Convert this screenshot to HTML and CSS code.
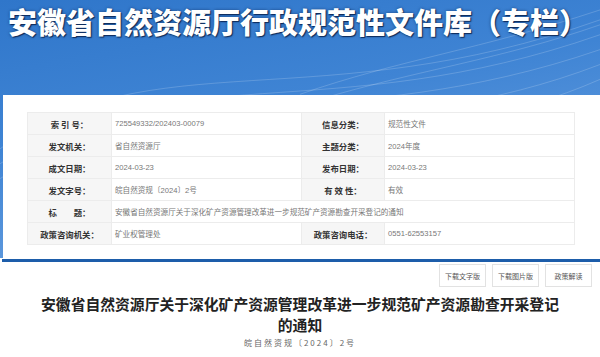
FILE: index.html
```html
<!DOCTYPE html>
<html lang="zh-CN">
<head>
  <meta charset="UTF-8" />
  <meta name="viewport" content="width=device-width, initial-scale=1.0" />
  <title>安徽省自然资源厅行政规范性文件库（专栏）</title>
  <link rel="stylesheet" href="styles.css">
</head>
<body>
  <div class="top">
    <svg class="waves" viewBox="0 0 600 260" preserveAspectRatio="none">
      <path d="M0 150 C150 40 320 120 600 20" />
      <path d="M0 165 C170 55 330 130 600 35" />
      <path d="M0 180 C180 70 340 140 600 50" />
      <path d="M60 200 C220 90 380 150 600 65" />
      <path d="M120 220 C260 110 420 160 600 80" />
      <path d="M300 95 C400 60 480 50 600 10" />
      <path d="M320 100 C420 70 500 60 600 25" />
    </svg>
    <h1 class="site-title">安徽省自然资源厅行政规范性文件库（专栏）</h1>

    <div class="panel">
      <table class="meta">
        <tr>
          <th>索 引 号：</th>
          <td>725549332/202403-00079</td>
          <th>信息分类：</th>
          <td>规范性文件</td>
        </tr>
        <tr>
          <th>发文机关：</th>
          <td>省自然资源厅</td>
          <th>主题分类：</th>
          <td>2024年度</td>
        </tr>
        <tr>
          <th>成文日期：</th>
          <td>2024-03-23</td>
          <th>发布日期：</th>
          <td>2024-03-23</td>
        </tr>
        <tr>
          <th>发文字号：</th>
          <td>皖自然资规〔2024〕2号</td>
          <th>有 效 性：</th>
          <td>有效</td>
        </tr>
        <tr>
          <th>标　　题：</th>
          <td colspan="3">安徽省自然资源厅关于深化矿产资源管理改革进一步规范矿产资源勘查开采登记的通知</td>
        </tr>
        <tr>
          <th>政策咨询机关：</th>
          <td>矿业权管理处</td>
          <th>政策咨询电话：</th>
          <td>0551-62553157</td>
        </tr>
      </table>
    </div>
  </div>
  <div class="rule"></div>

  <div class="article">
    <div class="tools">
      <a class="tool-btn" href="#">下载文字版</a>
      <a class="tool-btn" href="#">下载图片版</a>
      <a class="tool-btn" href="#">政策解读</a>
    </div>
    <h2 class="doc-title">安徽省自然资源厅关于深化矿产资源管理改革进一步规范矿产资源勘查开采登记<br>的通知</h2>
    <div class="doc-num">皖自然资规〔2024〕2号</div>
  </div>
</body>
</html>
```

FILE: styles.css
```css
* {
  box-sizing: border-box;
}

body {
  margin: 0;
  font-family: "Liberation Sans", "Noto Sans CJK SC", sans-serif;
  background-color: #ffffff;
  color: #333;
}

.top {
  position: relative;
  background: linear-gradient(170deg, #2f76ca 0%, #3f84d4 40%, #5e99dd 75%, #8bb8e8 100%);
  padding-left: 3px;
  overflow: hidden;
}

.waves {
  position: absolute;
  left: 0;
  top: 0;
  width: 100%;
  height: 100%;
}

.waves path {
  fill: none;
  stroke: rgba(255, 255, 255, 0.18);
  stroke-width: 1;
}

.site-title {
  position: relative;
  margin: 0;
  height: 95px;
  padding: 2px 0 0 5px;
  font-family: "Noto Sans CJK SC", sans-serif;
  font-size: 29px;
  font-weight: 900;
  line-height: 38px;
  color: #ffffff;
  text-shadow: 1px 1px 1px rgba(10, 35, 80, 0.9), 0 0 3px rgba(10, 35, 80, 0.6);
}

.panel {
  position: relative;
  background-color: #ffffff;
  padding: 17px 25px 13px 24px;
}

.meta {
  width: 548px;
  border-collapse: collapse;
  table-layout: fixed;
}

.meta th,
.meta td {
  height: 22px;
  padding: 0;
  border: 1px solid #ececec;
  font-weight: normal;
}

.meta th {
  background-color: #f6f6f6;
  font-family: "Noto Sans CJK SC", sans-serif;
  font-size: 8.4px;
  font-weight: 700;
  color: #333;
  text-align: center;
  white-space: nowrap;
}

.meta th:nth-child(1) {
  width: 84px;
}

.meta td:nth-child(2) {
  width: 190px;
}

.meta th:nth-child(3) {
  width: 83px;
}

.meta td {
  padding-left: 3px;
  font-size: 7.6px;
  color: #777;
  white-space: nowrap;
}

.rule {
  height: 3px;
  margin: 1px 0 0 2px;
  background-color: #1d5daa;
}

.article {
  padding: 2px 8px 0 8px;
}

.tools {
  display: flex;
  justify-content: flex-end;
  gap: 6px;
}

.tool-btn {
  display: flex;
  align-items: center;
  justify-content: center;
  width: 47px;
  height: 23px;
  border: 1px solid #e2e2e2;
  font-family: "Noto Sans CJK SC", sans-serif;
  font-size: 7px;
  color: #555;
  text-decoration: none;
}

.doc-title {
  margin: 6px 0 0 0;
  padding: 0 8px;
  font-family: "Noto Sans CJK SC", serif;
  font-size: 14.8px;
  font-weight: 700;
  line-height: 21px;
  color: #222;
  text-align: center;
}

.doc-num {
  margin-top: 2px;
  font-family: "Noto Sans CJK SC", sans-serif;
  font-size: 8px;
  letter-spacing: 2px;
  color: #666;
  text-align: center;
}
```
